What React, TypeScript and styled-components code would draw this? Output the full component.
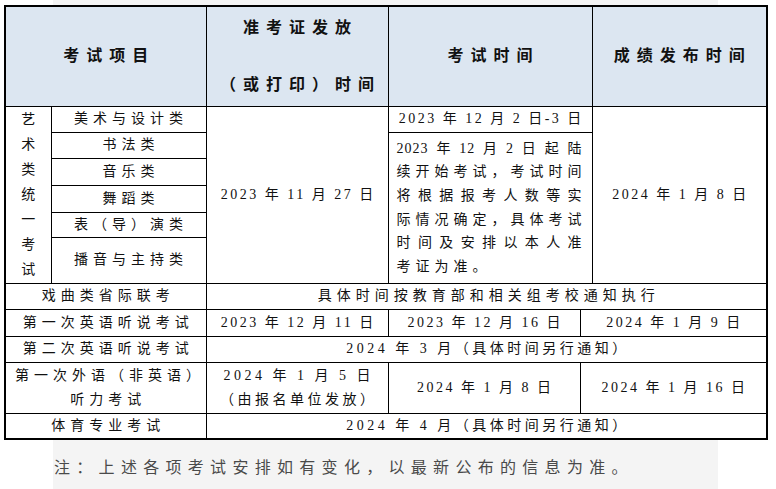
import React from 'react';
import styled, { createGlobalStyle } from 'styled-components';

const GlobalStyle = createGlobalStyle`
  html, body {
    margin: 0;
    padding: 0;
    background: #ffffff;
  }
  body {
    font-family: "Liberation Serif", "Noto Sans CJK SC", serif;
    color: #111111;
  }
`;

const Page = styled.div`
  width: 776px;
  height: 489px;
  overflow: hidden;
`;

const TopStrip = styled.div`
  margin-left: 53px;
  width: 665px;
  height: 5px;
  background: #f4f4f4;
`;

const TableWrap = styled.div`
  padding-left: 4px;
`;

const Table = styled.table`
  border-collapse: collapse;
  table-layout: fixed;
  width: 762px;
  border: 2px solid #000000;
`;

const Row = styled.tr<{ $h: number }>`
  height: ${({ $h }) => $h}px;
`;

const HeadCell = styled.th`
  border: 1px solid #000000;
  background: #dce6f1;
  padding: 0 0 0 7px;
  text-align: center;
  vertical-align: middle;
  font-size: 16px;
  font-weight: 700;
  letter-spacing: 7px;
  line-height: 28px;
  white-space: nowrap;
`;

const HeadLine = styled.div<{ $gap?: number }>`
  margin-top: ${({ $gap = 0 }) => $gap}px;
`;

const Cell = styled.td<{ $spacing?: number }>`
  border: 1px solid #000000;
  padding: 0 4px 0 ${({ $spacing = 5 }) => 4 + $spacing}px;
  text-align: center;
  vertical-align: middle;
  font-size: 14px;
  letter-spacing: ${({ $spacing = 5 }) => $spacing}px;
  line-height: 24px;
  white-space: nowrap;
`;

const ParaCell = styled.td`
  border: 1px solid #000000;
  padding: 0 9px 0 8px;
  vertical-align: middle;
  font-size: 14px;
`;

const ParaLine = styled.div<{ $last?: boolean }>`
  text-align: ${({ $last }) => ($last ? 'left' : 'justify')};
  text-align-last: ${({ $last }) => ($last ? 'left' : 'justify')};
  letter-spacing: ${({ $last }) => ($last ? '5px' : '1px')};
  line-height: 23.6px;
  white-space: nowrap;
`;

const VerticalText = styled.div`
  width: 14px;
  margin: 0 auto;
  font-size: 14px;
  line-height: 25px;
  letter-spacing: 0;
  white-space: normal;
  word-break: break-all;
`;

const Note = styled.div`
  margin-left: 53px;
  width: 665px;
  height: 50px;
  box-sizing: border-box;
  padding: 2px 0 0 1px;
  display: flex;
  align-items: center;
  background: #f4f4f4;
  font-size: 16px;
  letter-spacing: 6.3px;
  color: #4a4a4a;
  white-space: nowrap;
`;

const columns = [46, 155, 182, 192, 12, 175];

const artItems = [
  { name: '美术与设计类', h: 26 },
  { name: '书法类', h: 26 },
  { name: '音乐类', h: 27 },
  { name: '舞蹈类', h: 27 },
  { name: '表（导）演类', h: 25 },
  { name: '播音与主持类', h: 46 },
];

const examLines = [
  '2023年12月2日起陆',
  '续开始考试，考试时间',
  '将根据报考人数等实',
  '际情况确定，具体考试',
  '时间及安排以本人准',
];

const App = () => {
  return (
    <Page>
      <GlobalStyle />
      <TopStrip />
      <TableWrap>
        <Table>
          <colgroup>
            {columns.map((w, i) => (
              <col key={'col-' + i} style={{ width: w }} />
            ))}
          </colgroup>
          <tbody>
            <Row $h={100}>
              <HeadCell colSpan={2}>考试项目</HeadCell>
              <HeadCell>
                <HeadLine>准考证发放</HeadLine>
                <HeadLine $gap={29}>（或打印）时间</HeadLine>
              </HeadCell>
              <HeadCell colSpan={2}>考试时间</HeadCell>
              <HeadCell>成绩发布时间</HeadCell>
            </Row>

            {artItems.map((item, i) => (
              <Row $h={item.h} key={'art-' + item.name}>
                {i === 0 && (
                  <Cell rowSpan={6} $spacing={0}>
                    <VerticalText>艺术类统一考试</VerticalText>
                  </Cell>
                )}
                <Cell>{item.name}</Cell>
                {i === 0 && (
                  <>
                    <Cell rowSpan={6} $spacing={2.5}>
                      2023 年 11 月 27 日
                    </Cell>
                    <Cell colSpan={2} $spacing={2.5}>
                      2023 年 12 月 2 日-3 日
                    </Cell>
                    <Cell rowSpan={6} $spacing={2.5}>
                      2024 年 1 月 8 日
                    </Cell>
                  </>
                )}
                {i === 1 && (
                  <ParaCell rowSpan={5} colSpan={2}>
                    {examLines.map((line) => (
                      <ParaLine key={line}>{line}</ParaLine>
                    ))}
                    <ParaLine $last>考证为准。</ParaLine>
                  </ParaCell>
                )}
              </Row>
            ))}

            <Row $h={26}>
              <Cell colSpan={2}>戏曲类省际联考</Cell>
              <Cell colSpan={4}>具体时间按教育部和相关组考校通知执行</Cell>
            </Row>
            <Row $h={27}>
              <Cell colSpan={2}>第一次英语听说考试</Cell>
              <Cell $spacing={2.5}>2023 年 12 月 11 日</Cell>
              <Cell $spacing={2.5}>2023 年 12 月 16 日</Cell>
              <Cell colSpan={2} $spacing={2.5}>
                2024 年 1 月 9 日
              </Cell>
            </Row>
            <Row $h={26}>
              <Cell colSpan={2}>第二次英语听说考试</Cell>
              <Cell colSpan={4} $spacing={3.5}>
                2024 年 3 月（具体时间另行通知）
              </Cell>
            </Row>
            <Row $h={51}>
              <Cell colSpan={2}>
                第一次外语（非英语）
                <br />
                听力考试
              </Cell>
              <Cell $spacing={3.5}>
                2024 年 1 月 5 日
                <br />
                （由报名单位发放）
              </Cell>
              <Cell $spacing={2.5}>2024 年 1 月 8 日</Cell>
              <Cell colSpan={2} $spacing={2.5}>
                2024 年 1 月 16 日
              </Cell>
            </Row>
            <Row $h={26}>
              <Cell colSpan={2}>体育专业考试</Cell>
              <Cell colSpan={4} $spacing={3.5}>
                2024 年 4 月（具体时间另行通知）
              </Cell>
            </Row>
          </tbody>
        </Table>
      </TableWrap>
      <Note>注：上述各项考试安排如有变化，以最新公布的信息为准。</Note>
    </Page>
  );
};

export default App;
